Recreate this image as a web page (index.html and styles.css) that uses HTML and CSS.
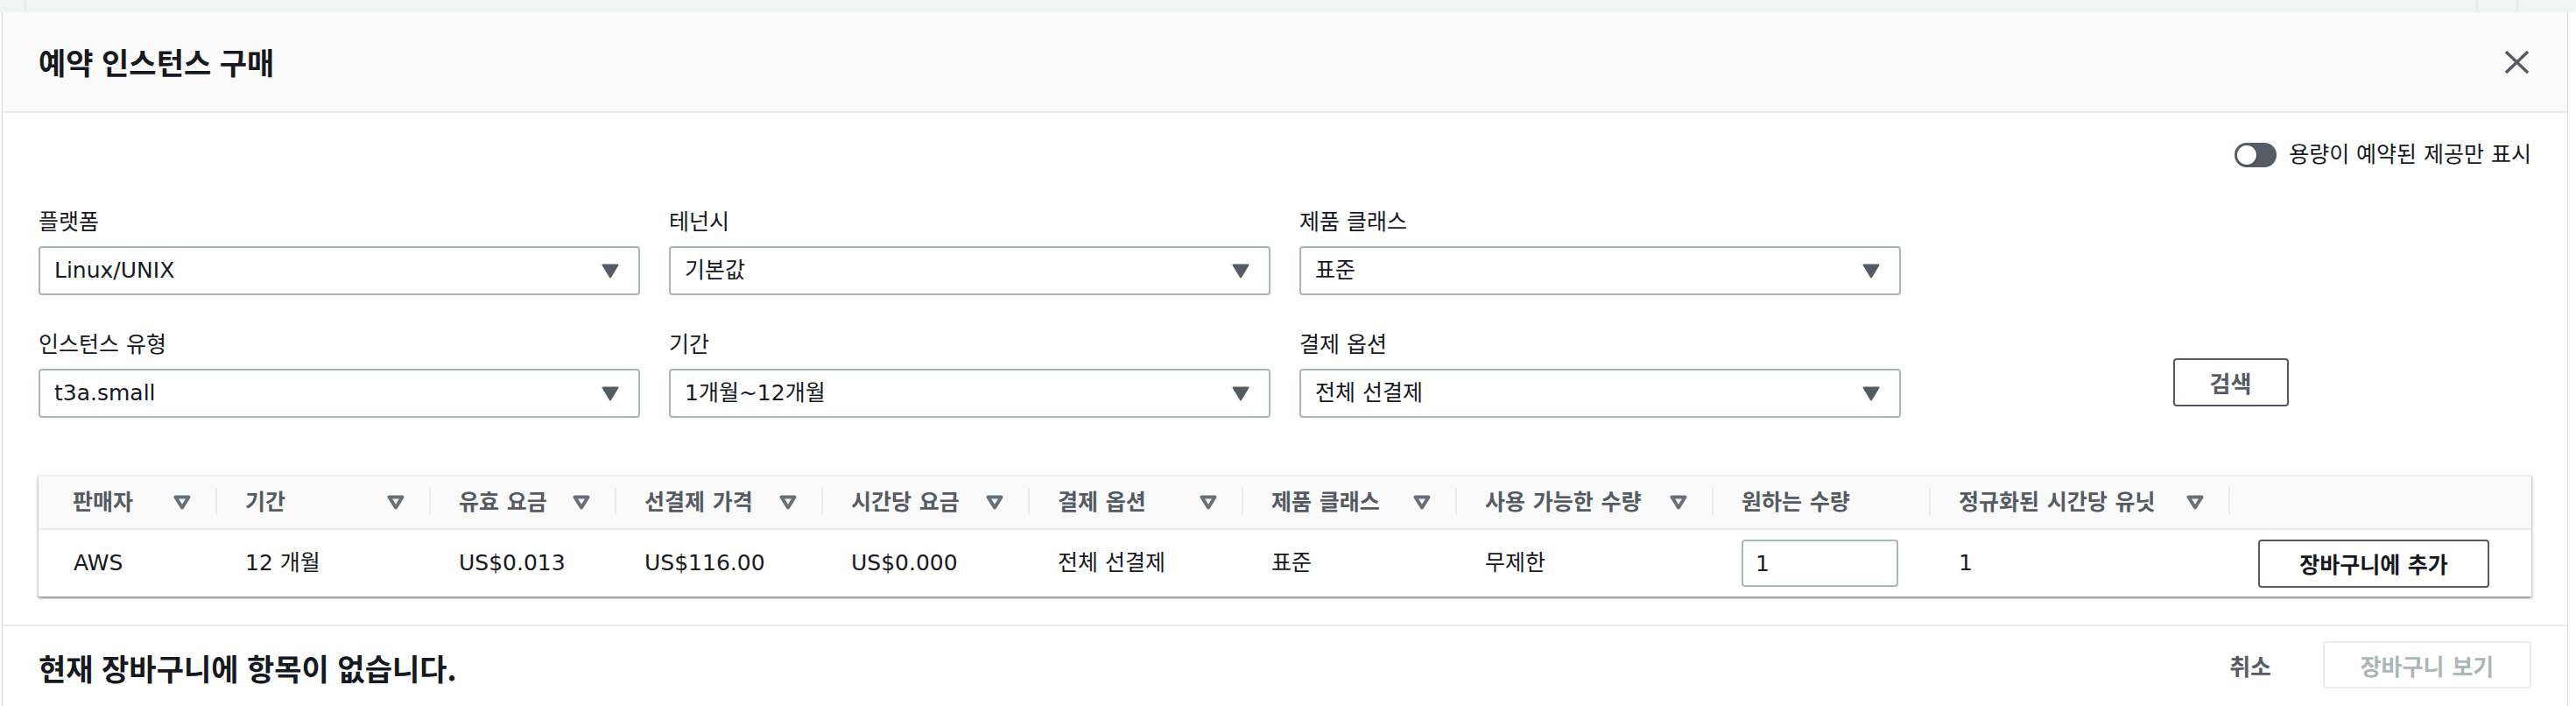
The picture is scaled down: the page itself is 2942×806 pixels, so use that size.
FILE: index.html
```html
<!DOCTYPE html>
<html lang="ko">
<head>
<meta charset="utf-8">
<title>예약 인스턴스 구매</title>
<link rel="stylesheet" href="styles.css">
</head>
<body>
<div class="page-strip"><span class="strip-cell strip-a"></span><span class="strip-cell strip-b"></span><span class="strip-cell strip-c"></span></div>
<div class="modal">
  <header class="modal-header">
    <h1 class="modal-title">예약 인스턴스 구매</h1>
    <button class="close-btn" aria-label="닫기">
      <svg width="27" height="26" viewBox="0 0 27 26"><path d="M1 1 L26 25 M26 1 L1 25" stroke="#545b64" stroke-width="3.4" fill="none"/></svg>
    </button>
  </header>
  <div class="modal-body">
    <div class="toggle-row">
      <span class="toggle"><span class="toggle-knob"></span></span>
      <span class="toggle-label">용량이 예약된 제공만 표시</span>
    </div>
    <div class="filters">
      <div class="field">
        <div class="field-label">플랫폼</div>
        <div class="select"><span>Linux/UNIX</span><svg class="caret" width="20" height="17" viewBox="0 0 20 17"><path d="M1.5 1.5 H18.5 L10 15.5 Z" fill="#545b64" stroke="#545b64" stroke-width="2" stroke-linejoin="round"/></svg></div>
      </div>
      <div class="field">
        <div class="field-label">테넌시</div>
        <div class="select"><span>기본값</span><svg class="caret" width="20" height="17" viewBox="0 0 20 17"><path d="M1.5 1.5 H18.5 L10 15.5 Z" fill="#545b64" stroke="#545b64" stroke-width="2" stroke-linejoin="round"/></svg></div>
      </div>
      <div class="field">
        <div class="field-label">제품 클래스</div>
        <div class="select"><span>표준</span><svg class="caret" width="20" height="17" viewBox="0 0 20 17"><path d="M1.5 1.5 H18.5 L10 15.5 Z" fill="#545b64" stroke="#545b64" stroke-width="2" stroke-linejoin="round"/></svg></div>
      </div>
      <div class="field-spacer"></div>
      <div class="field">
        <div class="field-label">인스턴스 유형</div>
        <div class="select"><span>t3a.small</span><svg class="caret" width="20" height="17" viewBox="0 0 20 17"><path d="M1.5 1.5 H18.5 L10 15.5 Z" fill="#545b64" stroke="#545b64" stroke-width="2" stroke-linejoin="round"/></svg></div>
      </div>
      <div class="field">
        <div class="field-label">기간</div>
        <div class="select"><span>1개월~12개월</span><svg class="caret" width="20" height="17" viewBox="0 0 20 17"><path d="M1.5 1.5 H18.5 L10 15.5 Z" fill="#545b64" stroke="#545b64" stroke-width="2" stroke-linejoin="round"/></svg></div>
      </div>
      <div class="field">
        <div class="field-label">결제 옵션</div>
        <div class="select"><span>전체 선결제</span><svg class="caret" width="20" height="17" viewBox="0 0 20 17"><path d="M1.5 1.5 H18.5 L10 15.5 Z" fill="#545b64" stroke="#545b64" stroke-width="2" stroke-linejoin="round"/></svg></div>
      </div>
      <div class="search-cell"><button class="btn-search">검색</button></div>
    </div>
    <div class="results">
      <div class="th th-first"><span>판매자</span><svg class="sort" width="20" height="17" viewBox="0 0 20 17"><path d="M2.5 2.5 H17.5 L10 14.5 Z" fill="none" stroke="#687078" stroke-width="4" stroke-linejoin="round"/></svg></div>
      <div class="th"><span>기간</span><svg class="sort" width="20" height="17" viewBox="0 0 20 17"><path d="M2.5 2.5 H17.5 L10 14.5 Z" fill="none" stroke="#687078" stroke-width="4" stroke-linejoin="round"/></svg></div>
      <div class="th"><span>유효 요금</span><svg class="sort" width="20" height="17" viewBox="0 0 20 17"><path d="M2.5 2.5 H17.5 L10 14.5 Z" fill="none" stroke="#687078" stroke-width="4" stroke-linejoin="round"/></svg></div>
      <div class="th"><span>선결제 가격</span><svg class="sort" width="20" height="17" viewBox="0 0 20 17"><path d="M2.5 2.5 H17.5 L10 14.5 Z" fill="none" stroke="#687078" stroke-width="4" stroke-linejoin="round"/></svg></div>
      <div class="th"><span>시간당 요금</span><svg class="sort" width="20" height="17" viewBox="0 0 20 17"><path d="M2.5 2.5 H17.5 L10 14.5 Z" fill="none" stroke="#687078" stroke-width="4" stroke-linejoin="round"/></svg></div>
      <div class="th"><span>결제 옵션</span><svg class="sort" width="20" height="17" viewBox="0 0 20 17"><path d="M2.5 2.5 H17.5 L10 14.5 Z" fill="none" stroke="#687078" stroke-width="4" stroke-linejoin="round"/></svg></div>
      <div class="th"><span>제품 클래스</span><svg class="sort" width="20" height="17" viewBox="0 0 20 17"><path d="M2.5 2.5 H17.5 L10 14.5 Z" fill="none" stroke="#687078" stroke-width="4" stroke-linejoin="round"/></svg></div>
      <div class="th"><span>사용 가능한 수량</span><svg class="sort" width="20" height="17" viewBox="0 0 20 17"><path d="M2.5 2.5 H17.5 L10 14.5 Z" fill="none" stroke="#687078" stroke-width="4" stroke-linejoin="round"/></svg></div>
      <div class="th"><span>원하는 수량</span></div>
      <div class="th"><span>정규화된 시간당 유닛</span><svg class="sort" width="20" height="17" viewBox="0 0 20 17"><path d="M2.5 2.5 H17.5 L10 14.5 Z" fill="none" stroke="#687078" stroke-width="4" stroke-linejoin="round"/></svg></div>
      <div class="th"></div>

      <div class="td td-first">AWS</div>
      <div class="td">12 개월</div>
      <div class="td">US$0.013</div>
      <div class="td">US$116.00</div>
      <div class="td">US$0.000</div>
      <div class="td">전체 선결제</div>
      <div class="td">표준</div>
      <div class="td">무제한</div>
      <div class="td"><input class="qty" type="text" value="1"></div>
      <div class="td">1</div>
      <div class="td"><button class="btn-add">장바구니에 추가</button></div>
    </div>
  </div>
  <footer class="modal-footer">
    <div class="cart-empty">현재 장바구니에 항목이 없습니다.</div>
    <div class="footer-actions">
      <button class="btn-cancel">취소</button>
      <button class="btn-view" disabled>장바구니 보기</button>
    </div>
  </footer>
</div>
</body>
</html>
```

FILE: styles.css
```css
* { box-sizing: border-box; }

html, body {
  margin: 0;
  padding: 0;
}

body {
  width: 2942px;
  height: 806px;
  overflow: hidden;
  background: #ffffff;
  font-family: "DejaVu Sans", "Noto Sans CJK KR", sans-serif;
  font-size: 25px;
  line-height: 30px;
  color: #16191f;
}

button, input {
  font-family: inherit;
  margin: 0;
}

/* background page strip */
.page-strip {
  height: 14px;
  background: #f2f3f3;
  display: flex;
}
.strip-cell { display: block; height: 14px; border-right: 2px solid #e6eaea; }
.strip-a { width: 30px; }
.strip-b { width: 2800px; }
.strip-c { width: 46px; }

/* modal */
.modal {
  margin: 0 9px 0 2px;
  height: 792px;
  background: #ffffff;
  border-left: 1px solid #d5dbdb;
  border-right: 1px solid #d5dbdb;
  display: flex;
  flex-direction: column;
}

.modal-header {
  height: 115px;
  background: #fafafa;
  border-bottom: 2px solid #eaeded;
  padding: 0 41px;
  display: flex;
  align-items: center;
  justify-content: space-between;
  flex: none;
}

.modal-title {
  margin: 0;
  font-family: "Noto Sans CJK KR", sans-serif;
  font-size: 34px;
  line-height: 44px;
  font-weight: 700;
  color: #16191f;
}

.close-btn {
  border: 0;
  background: transparent;
  padding: 0;
  margin-right: 3px;
  width: 27px;
  height: 26px;
  display: flex;
}

.modal-body {
  padding: 33px 41px 32px;
  flex: none;
}

.toggle-row {
  height: 30px;
  display: flex;
  justify-content: flex-end;
  align-items: center;
  gap: 14px;
}

.toggle {
  width: 48px;
  height: 28px;
  border-radius: 14px;
  background: #545b64;
  padding: 3px;
  display: flex;
  align-items: center;
}

.toggle-knob {
  width: 22px;
  height: 22px;
  border-radius: 50%;
  background: #ffffff;
  box-shadow: 1px 1px 1px rgba(0, 0, 0, 0.25);
}

.toggle-label { white-space: nowrap; }

/* filters */
.filters {
  margin-top: 47px;
  display: grid;
  grid-template-columns: repeat(4, 1fr);
  column-gap: 33px;
  row-gap: 42px;
}

.field-label {
  line-height: 30px;
  margin-bottom: 12px;
  color: #16191f;
}

.select {
  height: 56px;
  border: 2px solid #aab7b8;
  border-radius: 4px;
  padding: 0 22px 0 16px;
  display: flex;
  align-items: center;
  justify-content: space-between;
  background: #ffffff;
}

.caret { display: block; }

.search-cell {
  padding-top: 30px;
  display: flex;
  justify-content: center;
  align-items: flex-start;
}

.btn-search {
  width: 132px;
  height: 55px;
  border: 2px solid #545b64;
  border-radius: 4px;
  background: #ffffff;
  color: #545b64;
  font-size: 26px;
  font-weight: 700;
  padding: 0;
}

/* results table */
.results {
  margin-top: 65px;
  display: grid;
  grid-template-columns: 202px 244px 212px 236px 236px 244px 244px 293px 248px 342px 1fr;
  border-top: 2px solid #eaeded;
  box-shadow: 0 2px 2px 0 rgba(0, 28, 36, 0.3), 2px 2px 2px 0 rgba(0, 28, 36, 0.12), -2px 2px 2px 0 rgba(0, 28, 36, 0.12);
}

.th {
  position: relative;
  height: 61px;
  background: #fafafa;
  border-bottom: 2px solid #eaeded;
  padding: 0 28px 0 34px;
  display: flex;
  align-items: center;
  justify-content: space-between;
  font-weight: 700;
  color: #545b64;
  white-space: nowrap;
}

.th::before {
  content: "";
  position: absolute;
  left: 0;
  top: 13px;
  width: 2px;
  height: 31px;
  background: #eaeded;
}

.th-first { padding-left: 39px; }
.th-first::before { display: none; }

.sort { display: block; flex: none; }

.td {
  height: 76px;
  padding: 0 0 0 34px;
  display: flex;
  align-items: center;
  white-space: nowrap;
  color: #16191f;
}

.td-first { padding-left: 40px; }

.qty {
  width: 179px;
  height: 54px;
  border: 2px solid #aab7b8;
  border-radius: 4px;
  padding: 0 14px;
  font-size: 25px;
  color: #16191f;
  background: #ffffff;
}

.btn-add {
  width: 264px;
  height: 55px;
  border: 2px solid #545b64;
  border-radius: 4px;
  background: #ffffff;
  color: #16191f;
  font-size: 25px;
  font-weight: 700;
  padding: 0;
}

/* footer */
.modal-footer {
  flex: 1;
  border-top: 2px solid #eaeded;
  padding: 17px 41px 0;
  display: flex;
  justify-content: space-between;
  align-items: flex-start;
}

.cart-empty {
  margin-top: 9px;
  font-family: "Noto Sans CJK KR", sans-serif;
  font-size: 34px;
  line-height: 44px;
  font-weight: 700;
  color: #16191f;
}

.footer-actions {
  display: flex;
  align-items: center;
  gap: 59px;
}

.btn-cancel {
  border: 0;
  background: transparent;
  padding: 0;
  font-size: 26px;
  font-weight: 700;
  color: #545b64;
}

.btn-view {
  width: 238px;
  height: 54px;
  border: 2px solid #eaeded;
  border-radius: 4px;
  background: #ffffff;
  color: #aab7b8;
  font-size: 26px;
  font-weight: 700;
  padding: 0;
}
```
